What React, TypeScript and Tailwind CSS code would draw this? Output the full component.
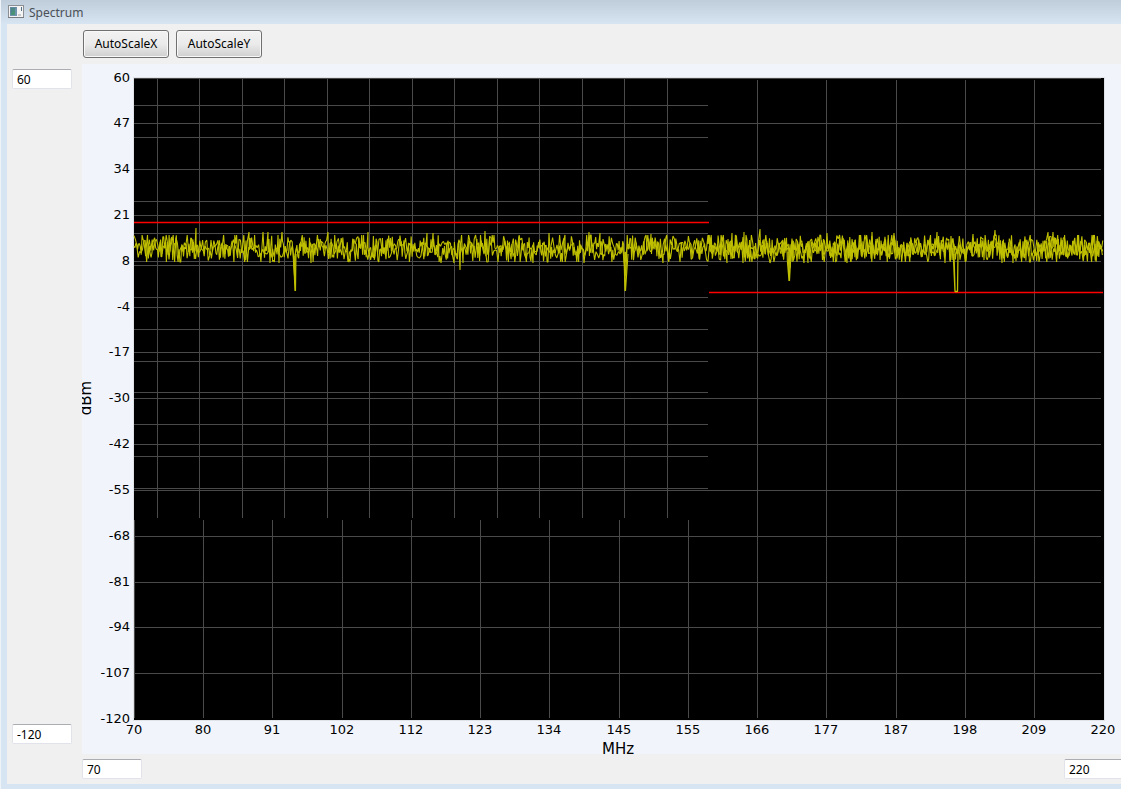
import { useMemo } from 'react';

interface IRangeInputProps {
  label: string;
  value: string;
  className?: string;
}

interface IPeak {
  x: number;
  y: number;
}

const PLOT_WIDTH = 970;
const PLOT_HEIGHT = 642;
// where the short sweep ends
const SPLIT_X = 575;
const SPLIT_Y = 442;

const X_STEP = 69.24;
const Y_STEP = 45.83;

const yTicks = [60, 47, 34, 21, 8, -4, -17, -30, -42, -55, -68, -81, -94, -107, -120];
const xTicks = [70, 80, 91, 102, 112, 123, 134, 145, 155, 166, 177, 187, 198, 209, 220];

const minorX = [23, 65, 108, 150, 193, 235, 278, 320, 363, 405, 448, 490, 533];
const minorY = [27, 59, 123, 155, 187, 219, 251, 283, 314, 346, 378, 410];

const peaks: IPeak[] = [
  { x: 62, y: 150 }, { x: 115, y: 154 }, { x: 129, y: 154 }, { x: 134, y: 154 },
  { x: 136, y: 185 }, { x: 145, y: 185 }, { x: 148, y: 154 }, { x: 161, y: 213 },
  { x: 177, y: 185 }, { x: 194, y: 154 }, { x: 234, y: 154 }, { x: 293, y: 155 },
  { x: 299, y: 155 }, { x: 307, y: 185 }, { x: 320, y: 185 }, { x: 326, y: 192 },
  { x: 329, y: 185 }, { x: 351, y: 153 }, { x: 360, y: 157 }, { x: 399, y: 185 },
  { x: 415, y: 155 }, { x: 431, y: 157 }, { x: 450, y: 185 }, { x: 455, y: 154 },
  { x: 466, y: 155 }, { x: 491, y: 213 }, { x: 517, y: 156 }, { x: 529, y: 185 },
  { x: 574, y: 157 }, { x: 593, y: 185 }, { x: 598, y: 155 }, { x: 609, y: 185 },
  { x: 610, y: 154 }, { x: 626, y: 151 }, { x: 636, y: 185 }, { x: 655, y: 203 },
  { x: 670, y: 185 }, { x: 674, y: 185 }, { x: 693, y: 155 }, { x: 713, y: 185 },
  { x: 738, y: 154 }, { x: 760, y: 155 }, { x: 803, y: 154 }, { x: 811, y: 185 },
  { x: 832, y: 183 }, { x: 839, y: 156 }, { x: 861, y: 152 }, { x: 868, y: 185 },
  { x: 879, y: 185 }, { x: 914, y: 154 }, { x: 919, y: 154 }, { x: 958, y: 157 },
];

const createRandom = (seed: number) => {
  let state = seed;
  return () => {
    state = (state * 1664525 + 1013904223) % 4294967296;
    return state / 4294967296;
  };
};

const buildTrace = (seed: number, from: number, step: number, marks: IPeak[]) => {
  const random = createRandom(seed);
  const points: string[] = [];

  for (let x = from; x < PLOT_WIDTH - 1; x += step) {
    const mark = marks.find((item) => item.x >= x && item.x < x + step);
    const noise = (random() + random() + random() + random()) / 4 - 0.5;
    const y = mark ? mark.y : Math.max(157, Math.min(184, 170.5 + noise * 50));
    points.push(`${mark ? mark.x : x.toFixed(1)},${y.toFixed(1)}`);
  }

  return points.join(' ');
};

const RangeInput = ({ label, value, className = '' }: IRangeInputProps) => (
  <input
    type="text"
    aria-label={label}
    defaultValue={value}
    className={`h-5 w-15 shrink-0 rounded-xs border border-[#e2e3ea] border-t-[#abadb3] bg-white px-1 text-xs text-black outline-none ${className}`}
  />
);

const ToolButton = ({ text }: { text: string }) => (
  <button
    type="button"
    className="h-7 w-[86px] rounded-[3px] border border-[#707070] bg-linear-to-b from-[#f2f2f2] from-0% via-[#ebebeb] via-50% to-[#cfcfcf] to-100% text-xs text-black shadow-[inset_0_0_0_1px_#f8f8f8]"
  >
    {text}
  </button>
);

const WindowIcon = () => (
  <svg className="h-[14px] w-4" viewBox="0 0 16 14" aria-hidden="true">
    <rect x="0.5" y="0.5" width="15" height="12" fill="#f4f4f4" stroke="#8b8f93" />
    <path d="M0 12.5H16" stroke="#777b80" />
    <rect x="2" y="2" width="7" height="9" fill="#6f93ad" />
    <path d="M3 3H7V10H3Z" fill="#4a9377" />
    <path d="M2 10L8 3V2H2Z" fill="#527d96" opacity="0.5" />
    <path d="M10 10H13" stroke="#c9c9c9" strokeWidth="2" />
    <path d="M13.5 2V6" stroke="#557083" />
  </svg>
);

const SpectrumPlot = () => {
  const traces = useMemo(
    () => [
      buildTrace(17, 0, 0.9, peaks),
      buildTrace(91, 0, 1.4, [{ x: 161, y: 205 }, { x: 492, y: 198 }]),
      buildTrace(43, SPLIT_X, 1.1, [{ x: 656, y: 190 }]),
    ],
    [],
  );

  return (
    <svg
      className="block w-full bg-[#f1f5fb]"
      viewBox="0 0 1039 690"
      role="img"
      aria-label="Spectrum, dBm by MHz"
      fontFamily="'DejaVu Sans', sans-serif"
      fontSize="13"
    >
      <g transform="translate(52 14)">
        <rect x="-1" y="-1" width="972" height="644" fill="#dfe2e6" />
        <rect width={PLOT_WIDTH} height={PLOT_HEIGHT} fill="#000" />

        <g fill="#4a4a4a">
          {yTicks.slice(0, -1).map((tick, i) => (
            <rect key={tick} y={Math.floor(i * Y_STEP)} width="967" height="1" />
          ))}
          {xTicks.slice(0, -1).map((tick, i) => {
            const top = i < 9 ? SPLIT_Y : 2;
            return (
              <rect
                key={tick}
                x={Math.round(i * X_STEP)}
                y={top}
                width="1"
                height={640 - top}
              />
            );
          })}
          {minorX.map((x) => (
            <rect key={x} x={x} y="1" width="1" height="439" />
          ))}
          {minorY.map((y) => (
            <rect key={y} y={y} width={SPLIT_X - 1} height="1" />
          ))}
        </g>

        <path d="M0 144.5H575M575 214.5H969" stroke="#f00" strokeWidth="1.5" />

        <g fill="none" stroke="#bfbf00" strokeWidth="1.1" strokeLinejoin="bevel">
          {traces.map((points, i) => (
            <polyline key={i} points={points} />
          ))}
          <path d="M160 178L161.5 213L162 176M490 174L491.5 213L494 176M654 174L655.5 203L657 176" />
          <path d="M819 170L821 213.5H823.5L824 174M820 176L821 213" strokeWidth="1.3" />
        </g>

        {yTicks.map((tick, i) => (
          <text key={tick} x="-4" y={Math.floor(i * Y_STEP) + 4} textAnchor="end">
            {tick}
          </text>
        ))}
        {xTicks.map((tick, i) => (
          <text key={tick} x={Math.round(i * X_STEP)} y="656" textAnchor="middle">
            {tick}
          </text>
        ))}
      </g>

      <text x="536" y="690" fontSize="15" textAnchor="middle">
        MHz
      </text>
      <text transform="translate(9 334) rotate(-90)" fontSize="15" textAnchor="middle">
        dBm
      </text>
    </svg>
  );
};

const App = () => {
  return (
    <div className="overflow-hidden border-l border-[#eef3f8] bg-[#d7e4f2] pb-[5px] pl-1.5 font-['Noto_Sans',sans-serif]">
      <header className="-ml-1.5 flex h-6 items-center gap-[5px] bg-linear-to-b from-[#bfcddb] to-[#d7e4f2] pl-[7px]">
        <WindowIcon />
        <h1 className="pt-0.5 text-xs text-[#4a5056]">Spectrum</h1>
      </header>

      <main className="bg-[#f0f0f0] py-[5px] pl-[5px]">
        <div className="flex gap-[7px] pt-px pb-1.5 pl-[71px]">
          <ToolButton text="AutoScaleX" />
          <ToolButton text="AutoScaleY" />
        </div>

        <div className="flex gap-2.5">
          <div className="flex flex-col justify-between pt-[5px] pb-2.5">
            <RangeInput label="Maximum dBm" value="60" />
            <RangeInput label="Minimum dBm" value="-120" />
          </div>
          <div className="min-w-0 flex-1">
            <SpectrumPlot />
          </div>
        </div>

        <div className="flex justify-between pt-[5px] pl-[70px]">
          <RangeInput label="Start MHz" value="70" />
          <RangeInput label="Stop MHz" value="220" className="-mr-[3px]" />
        </div>
      </main>
    </div>
  );
};

export default App;
